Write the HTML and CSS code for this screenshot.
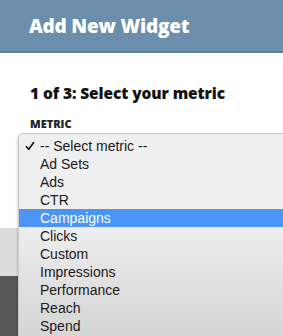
FILE: index.html
```html
<!DOCTYPE html>
<html>
<head>
<meta charset="utf-8">
<link rel="stylesheet" href="styles.css">
</head>
<body>
<div class="page">
  <header class="header"><h1 class="title">Add New Widget</h1></header>
  <main class="content">
    <h2 class="step">1 of 3: Select your metric</h2>
    <div class="label">METRIC</div>
    <div class="select-stub"></div>
  </main>
  <div class="band-light"></div>
  <div class="band-dark"></div>

  <div class="menu">
    <div class="item checked"><svg class="check" width="10" height="10" viewBox="0 0 10 10"><path d="M1 5.2 L3.8 8.2 L9 1" fill="none" stroke="#111" stroke-width="1.6"/></svg>-- Select metric --</div>
    <div class="item">Ad Sets</div>
    <div class="item">Ads</div>
    <div class="item">CTR</div>
    <div class="item selected">Campaigns</div>
    <div class="lower">
      <div class="item">Clicks</div>
      <div class="item">Custom</div>
      <div class="item">Impressions</div>
      <div class="item">Performance</div>
      <div class="item">Reach</div>
      <div class="item">Spend</div>
    </div>
  </div>
</div>
</body>
</html>
```

FILE: styles.css
```css
html, body {
  margin: 0;
  padding: 0;
}
body {
  width: 283px;
  height: 336px;
  overflow: hidden;
  background: #fff;
  font-family: "Liberation Sans", Arial, sans-serif;
}
.page {
  position: relative;
  width: 283px;
  height: 336px;
  display: flex;
  flex-direction: column;
}
.header {
  height: 51px;
  background: #6a8eac;
  border-bottom: 2px solid #5a7d9b;
  display: flex;
  align-items: center;
  padding-left: 29px;
  flex: none;
}
.title {
  margin: 0;
  color: #fff;
  font-family: "Open Sans", sans-serif;
  font-weight: 800;
  font-size: 19px;
  letter-spacing: -0.2px;
  position: relative;
  top: 0px;
}
.content {
  height: 175px;
  padding-left: 30px;
  flex: none;
}
.step {
  margin: 30px 0 0 0;
  font-family: "Open Sans", sans-serif;
  font-weight: 800;
  font-size: 15.5px;
  line-height: 20px;
  color: #111;
  letter-spacing: -0.1px;
}
.label {
  margin-top: 14px;
  font-family: "Open Sans", sans-serif;
  font-weight: 800;
  font-size: 11px;
  line-height: 13px;
  color: #222;
}
.band-light {
  height: 48px;
  background: #dcdcdc;
  flex: none;
}
.band-dark {
  flex: 1;
  background: #575757;
}
.menu {
  position: absolute;
  left: 18px;
  top: 133px;
  width: 275px;
  height: 210px;
  background: #efefef;
  border: 1px solid #c9c9c9;
  border-radius: 5px 0 0 0;
  padding-top: 3px;
  box-shadow: -1px 1px 2px rgba(0,0,0,0.15);
  font-size: 14px;
  color: #1a1a1a;
}
.item {
  height: 18px;
  line-height: 18px;
  padding-left: 21px;
  position: relative;
  white-space: nowrap;
}
.check {
  position: absolute;
  left: 6px;
  top: 4px;
}
.selected {
  background: #4b94fa;
  color: #fff;
  border-top: 1px solid #f4f0e2;
  margin-top: -1px;
  height: 18px;
}
.lower {
  background: linear-gradient(#eeeeee, #e2e2e2 40%, #d3d3d3);
  height: 120px;
}
```
